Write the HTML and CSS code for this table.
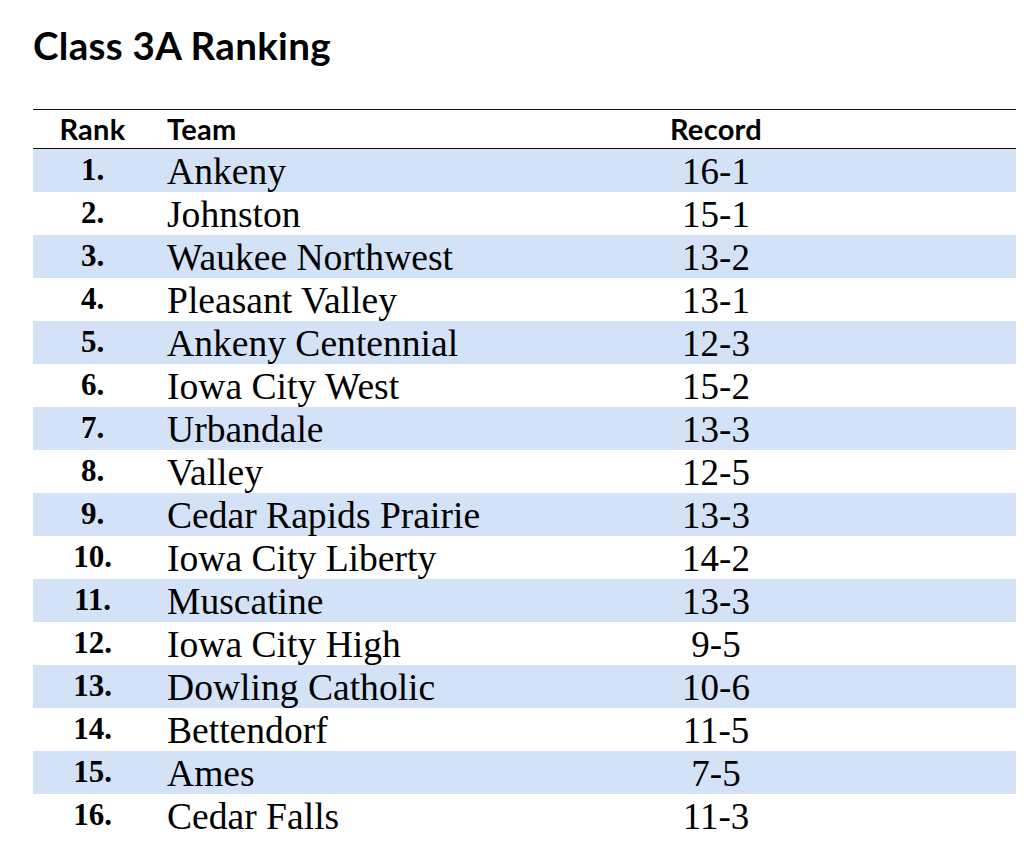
FILE: index.html
```html
<!DOCTYPE html>
<html>
<head>
<meta charset="utf-8">
<link rel="stylesheet" href="styles.css">
</head>
<body>
<div class="page">
  <h1 class="title">Class 3A Ranking</h1>
  <div class="table">
    <div class="row head">
      <div class="c-rank">Rank</div>
      <div class="c-team">Team</div>
      <div class="c-rec">Record</div>
    </div>
    <div class="row band"><div class="c-rank">1.</div><div class="c-team">Ankeny</div><div class="c-rec">16-1</div></div>
    <div class="row"><div class="c-rank">2.</div><div class="c-team">Johnston</div><div class="c-rec">15-1</div></div>
    <div class="row band"><div class="c-rank">3.</div><div class="c-team">Waukee Northwest</div><div class="c-rec">13-2</div></div>
    <div class="row"><div class="c-rank">4.</div><div class="c-team">Pleasant Valley</div><div class="c-rec">13-1</div></div>
    <div class="row band"><div class="c-rank">5.</div><div class="c-team">Ankeny Centennial</div><div class="c-rec">12-3</div></div>
    <div class="row"><div class="c-rank">6.</div><div class="c-team">Iowa City West</div><div class="c-rec">15-2</div></div>
    <div class="row band"><div class="c-rank">7.</div><div class="c-team">Urbandale</div><div class="c-rec">13-3</div></div>
    <div class="row"><div class="c-rank">8.</div><div class="c-team">Valley</div><div class="c-rec">12-5</div></div>
    <div class="row band"><div class="c-rank">9.</div><div class="c-team">Cedar Rapids Prairie</div><div class="c-rec">13-3</div></div>
    <div class="row"><div class="c-rank">10.</div><div class="c-team">Iowa City Liberty</div><div class="c-rec">14-2</div></div>
    <div class="row band"><div class="c-rank">11.</div><div class="c-team">Muscatine</div><div class="c-rec">13-3</div></div>
    <div class="row"><div class="c-rank">12.</div><div class="c-team">Iowa City High</div><div class="c-rec">9-5</div></div>
    <div class="row band"><div class="c-rank">13.</div><div class="c-team">Dowling Catholic</div><div class="c-rec">10-6</div></div>
    <div class="row"><div class="c-rank">14.</div><div class="c-team">Bettendorf</div><div class="c-rec">11-5</div></div>
    <div class="row band"><div class="c-rank">15.</div><div class="c-team">Ames</div><div class="c-rec">7-5</div></div>
    <div class="row"><div class="c-rank">16.</div><div class="c-team">Cedar Falls</div><div class="c-rec">11-3</div></div>
  </div>
</div>
</body>
</html>
```

FILE: styles.css
```css
html, body {
  margin: 0;
  padding: 0;
  background: #ffffff;
}

.page {
  padding: 22px 20px 0 33px;
  color: #000;
}

.title {
  margin: 0 0 41px 0;
  font-family: Lato, "Liberation Sans", sans-serif;
  font-weight: 700;
  font-size: 38.5px;
  line-height: 46px;
  letter-spacing: 0.3px;
}

.table {
  width: 983px;
}

.row {
  display: grid;
  grid-template-columns: 119px 388px 352px 1fr;
  height: 43px;
  font-family: "Liberation Serif", "Times New Roman", serif;
}

.row.band {
  background: #d3e2f6;
}

.row.head {
  height: 38px;
  border-top: 1px solid #111;
  border-bottom: 1px solid #111;
  font-family: Lato, "Liberation Sans", sans-serif;
  font-weight: 700;
  font-size: 29px;
  line-height: 38px;
  letter-spacing: 0.3px;
}

.row.head .c-rank,
.row.head .c-team,
.row.head .c-rec {
  font-family: inherit;
  font-weight: inherit;
  font-size: inherit;
  line-height: inherit;
  padding-top: 0;
}

.c-rank {
  text-align: center;
  font-weight: 700;
  font-size: 31px;
  line-height: 41px;
}

.c-team {
  padding-left: 15px;
  font-size: 37.6px;
  line-height: 43px;
  padding-top: 1px;
  white-space: nowrap;
}

.c-rec {
  text-align: center;
  font-size: 37px;
  line-height: 43px;
  padding-top: 1px;
}
```
